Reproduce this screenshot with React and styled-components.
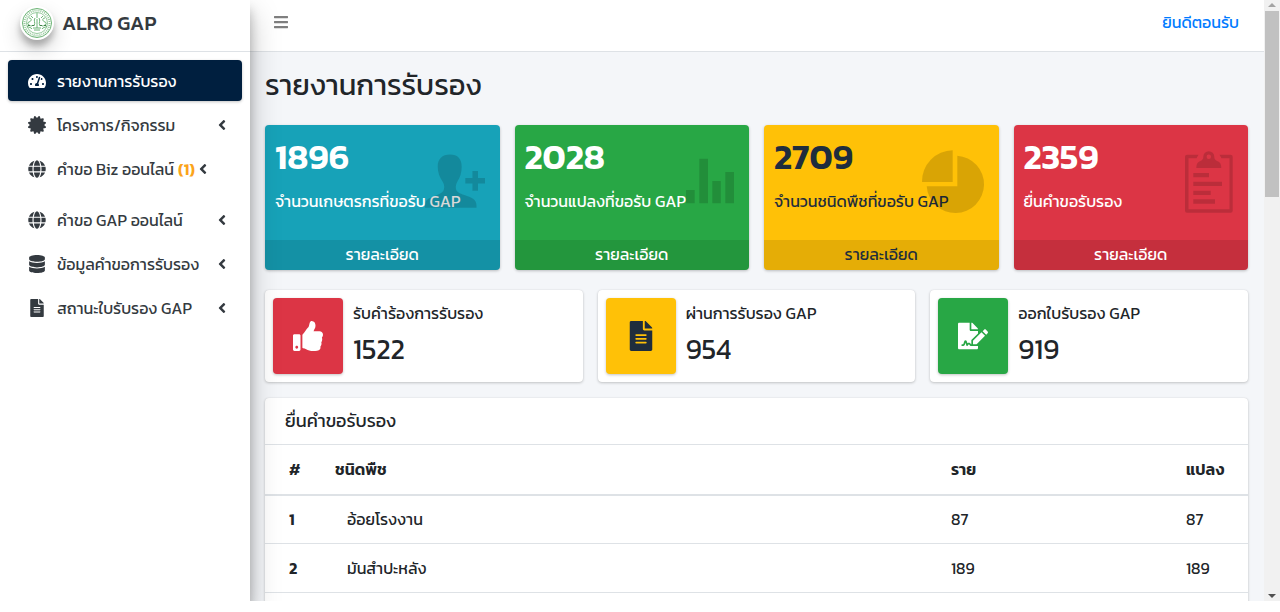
import React from "react";
import styled, { createGlobalStyle } from "styled-components";
import {
  FaAngleLeft,
  FaBars,
  FaCertificate,
  FaDatabase,
  FaFileAlt,
  FaFileSignature,
  FaGlobe,
  FaTachometerAlt,
  FaThumbsUp,
} from "react-icons/fa";

const GlobalStyle = createGlobalStyle`
  *, *::before, *::after { box-sizing: border-box; }
  body {
    margin: 0;
    background: #fff;
    color: #212529;
    font-family: Kanit, "Noto Sans Thai", "Noto Sans", sans-serif;
    font-size: 16px;
    line-height: 24px;
  }
  h1, h2, p, ul, dl, dd { margin: 0; padding: 0; }
  button { font: inherit; color: inherit; border: 0; background: none; padding: 0; cursor: pointer; }
  a { text-decoration: none; color: inherit; }
`;

const Screen = styled.div`
  height: 100vh;
  padding-bottom: 11px;
`;

const Shell = styled.div`
  display: flex;
  height: 100%;
  overflow: hidden;
`;

const Sidebar = styled.aside`
  position: relative;
  z-index: 2;
  flex: 0 0 250px;
  background: #fff;
  box-shadow: 0 14px 28px rgba(0, 0, 0, 0.25), 0 10px 10px rgba(0, 0, 0, 0.22);
`;

const Brand = styled.a`
  display: flex;
  align-items: center;
  gap: 8px;
  height: 52px;
  padding: 0 20px 5px;
  border-bottom: 1px solid #dee2e6;
  color: #343a40;
  font-size: 20px;
  font-weight: 500;
  white-space: nowrap;
`;

const Logo = styled.svg`
  flex: none;
  width: 34px;
  height: 34px;
  border-radius: 50%;
  background: #fff;
  box-shadow: 0 10px 20px rgba(0, 0, 0, 0.19), 0 6px 6px rgba(0, 0, 0, 0.23);
`;

const Menu = styled.ul`
  display: flex;
  flex-direction: column;
  gap: 3px;
  padding: 8px;
  list-style: none;
`;

const MenuItem = styled.li`
  padding-bottom: ${(p) => (p.$loose ? 7 : 0)}px;
`;

const MenuLink = styled.a`
  display: flex;
  align-items: center;
  height: 41px;
  padding: 0 12px 0 15px;
  border-radius: 4px;
  white-space: nowrap;
  color: ${(p) => (p.$active ? "#fff" : "#343a40")};
  background: ${(p) => (p.$active ? "#001f3f" : "transparent")};
  box-shadow: ${(p) => (p.$active ? "0 1px 3px rgba(0, 0, 0, 0.24)" : "none")};
`;

const MenuIcon = styled.span`
  display: flex;
  justify-content: center;
  width: 28px;
  margin-right: 6px;
  font-size: 18px;
`;

const Pending = styled.b`
  margin-left: 4px;
  color: #fba41a;
  font-weight: 600;
`;

const Chevron = styled(FaAngleLeft)`
  margin-left: ${(p) => (p.$inline ? "0" : "auto")};
  font-size: 16px;
`;

const Page = styled.div`
  flex: 1;
  min-width: 0;
  background: #f4f6f9;
`;

const TopBar = styled.header`
  display: flex;
  align-items: center;
  justify-content: space-between;
  height: 52px;
  padding: 0 25px 7px 23px;
  background: #fff;
  border-bottom: 1px solid #dee2e6;
`;

const MenuButton = styled.button`
  display: flex;
  font-size: 16px;
  color: #7f7f7f;
`;

const Welcome = styled.a`
  color: #007bff;
`;

const Content = styled.main`
  padding: 16px 16px 0 15px;
`;

const PageTitle = styled.h1`
  margin-bottom: 23px;
  font-size: 29px;
  line-height: 34px;
  font-weight: 400;
  white-space: nowrap;
`;

const Columns = styled.div`
  display: grid;
  grid-template-columns: repeat(${(p) => p.$count}, minmax(0, 1fr));
  gap: 15px;
  margin-bottom: ${(p) => p.$after}px;
`;

const StatCard = styled.section`
  position: relative;
  overflow: hidden;
  border-radius: 4px;
  color: ${(p) => p.$ink};
  background: ${(p) => p.$fill};
  box-shadow: 0 1px 3px rgba(0, 0, 0, 0.24);
`;

const StatBody = styled.div`
  height: 115px;
  padding: 10px;
`;

const StatNumber = styled.h2`
  margin-bottom: 10px;
  font-size: 35px;
  line-height: 44px;
  font-weight: 600;
`;

const StatLabel = styled.p`
  white-space: nowrap;
`;

const StatIcon = styled.svg`
  position: absolute;
  top: 15px;
  right: 15px;
  width: 72px;
  height: 72px;
  overflow: visible;
  fill: rgba(0, 0, 0, 0.15);
`;

const StatMore = styled.a`
  display: block;
  height: 30px;
  line-height: 28px;
  text-align: center;
  background: rgba(0, 0, 0, 0.1);
`;

const InfoBox = styled.section`
  display: flex;
  gap: 10px;
  padding: 8px;
  border-radius: 4px;
  background: #fff;
  box-shadow: 0 0 1px rgba(0, 0, 0, 0.13), 0 1px 3px rgba(0, 0, 0, 0.2);
`;

const InfoIcon = styled.div`
  display: flex;
  align-items: center;
  justify-content: center;
  width: 70px;
  height: 76px;
  border-radius: 4px;
  font-size: 30px;
  color: ${(p) => p.$ink};
  background: ${(p) => p.$fill};
  box-shadow: 0 1px 3px rgba(0, 0, 0, 0.24);
`;

const InfoText = styled.dl`
  padding-top: 3px;
  white-space: nowrap;
`;

const InfoValue = styled.dd`
  padding-top: 8px;
  font-size: 28px;
  line-height: 32px;
`;

const TableCard = styled.section`
  padding-bottom: 40px;
  border-radius: 4px;
  background: #fff;
  box-shadow: 0 0 1px rgba(0, 0, 0, 0.13), 0 1px 3px rgba(0, 0, 0, 0.2);
`;

const TableTitle = styled.h2`
  padding: 0 20px;
  font-size: 18px;
  line-height: 46px;
  font-weight: 400;
`;

const Table = styled.table`
  width: 100%;
  table-layout: fixed;
  border-collapse: collapse;
  text-align: left;

  th, td {
    height: 49px;
    padding: 0 12px;
    border-top: 1px solid #dee2e6;
    border-bottom: 1px solid #dee2e6;
    white-space: nowrap;
  }
  th { font-weight: 600; }
  thead th { height: 50px; border-bottom: 2px solid #dee2e6; }
  th:first-child { padding-left: 24px; }
  td:nth-child(2) { padding-left: 24px; }
`;

const Col = styled.col`
  width: ${(p) => p.$width};
`;

const ScrollTrack = styled.div`
  flex: 0 0 16px;
  display: flex;
  flex-direction: column;
  align-items: center;
  background: #f1f1f1;
`;

const ScrollThumb = styled.div`
  width: 14px;
  height: 31%;
  margin: 4px 0 auto;
  background: #c1c1c1;
`;

const ScrollArrow = styled.svg`
  width: 8px;
  height: 4px;
  margin: ${(p) => (p.$down ? "0 0 3px" : "3px 0 0")};
  fill: ${(p) => (p.$down ? "#505050" : "#a3a3a3")};
`;

const menu = [
  { label: "รายงานการรับรอง", icon: FaTachometerAlt, active: true },
  { label: "โครงการ/กิจกรรม", icon: FaCertificate },
  { label: "คำขอ Biz ออนไลน์", icon: FaGlobe, pending: "(1)" },
  { label: "คำขอ GAP ออนไลน์", icon: FaGlobe },
  { label: "ข้อมูลคำขอการรับรอง", icon: FaDatabase },
  { label: "สถานะใบรับรอง GAP", icon: FaFileAlt },
];

const PersonAdd = () => (
  <>
    <path d="M37 14.500c-8 0-12.300 4.500-12.300 12 0 6 2 11 4.500 14.500 1.800 2.500 2.300 5 1.800 8-.5 3-3 4.500-7 6-7 2.500-12 4-12 10.500v2.200h51.500v-2.200c0-6.500-5-8-12-10.500-5-1.500-8-3-8.500-6-.5-3 .2-5.500 1.700-8 2.500-3.500 4-8.500 4-14.500 0-7.500-3.700-12-11.700-12z" />
    <path d="M59.400 31h5.600v7h7v5.600h-7v7.100h-5.600v-7.100h-7.100v-5.600h7.100z" />
  </>
);

const Bars = () => (
  <path d="M24 50h8.700v13.300H24zM37.300 18.700H46v44.600h-8.700zM50.300 41h8.500v22.300h-8.500zM63.300 32H72v31.300h-8.700z" />
);

const Pie = () => (
  <>
    <path d="M40.700 42V10.300A31 31 0 0 0 10 42z" />
    <path d="M45.300 15.700v30.600H14.700A28.700 28.700 0 1 0 45.300 15.700z" />
  </>
);

const Clipboard = () => (
  <>
    <path d="M26 14.700h11.500l-2 3.500h-8v51h41v-51h-8l-2-3.500h11.200a2 2 0 0 1 2 2v54a2 2 0 0 1-2 2H26a2 2 0 0 1-2-2v-54a2 2 0 0 1 2-2z" />
    <path
      fillRule="evenodd"
      d="M47.800 11.200a5.500 5.500 0 0 1 5.500 5.500c0 3 2 3.800 4 4.800 2 1 3 3 3 6.500h-25c0-3.500 1-5.500 3-6.500s4-1.800 4-4.800a5.500 5.500 0 0 1 5.500-5.500zm0 3.300a2.200 2.200 0 1 0 0 4.400 2.200 2.200 0 0 0 0-4.400z"
    />
    <path d="M32.300 33h15.700v4.300H32.300zM32.300 41.700H61V46H32.300zM32.300 50.700h17.400V55H32.300zM32.300 59.300H54v4.400H32.300z" />
  </>
);

const stats = [
  { value: 1896, label: "จำนวนเกษตรกรที่ขอรับ GAP", fill: "#17a2b8", ink: "#fff", icon: PersonAdd },
  { value: 2028, label: "จำนวนแปลงที่ขอรับ GAP", fill: "#28a745", ink: "#fff", icon: Bars },
  { value: 2709, label: "จำนวนชนิดพืชที่ขอรับ GAP", fill: "#ffc107", ink: "#1f2d3d", icon: Pie },
  { value: 2359, label: "ยื่นคำขอรับรอง", fill: "#dc3545", ink: "#fff", icon: Clipboard },
];

const infos = [
  { value: 1522, label: "รับคำร้องการรับรอง", fill: "#dc3545", ink: "#fff", icon: FaThumbsUp },
  { value: 954, label: "ผ่านการรับรอง GAP", fill: "#ffc107", ink: "#1f2d3d", icon: FaFileAlt },
  { value: 919, label: "ออกใบรับรอง GAP", fill: "#28a745", ink: "#fff", icon: FaFileSignature },
];

const crops = [
  { name: "อ้อยโรงงาน", people: 87, plots: 87 },
  { name: "มันสำปะหลัง", people: 189, plots: 189 },
];

const Emblem = () => (
  <Logo viewBox="0 0 34 34" aria-hidden="true">
    <g fill="none" stroke="#6db476">
      <circle cx="17" cy="17" r="14.500" strokeWidth="1" />
      <circle cx="17" cy="17" r="12.500" strokeWidth="2" strokeDasharray="1 1" opacity="0.700" />
      <circle cx="17" cy="17" r="10.500" strokeWidth="0.700" />
      <path strokeWidth="1" d="M17 7v5M15 12c-2 3 1 4-1 8M19 12c2 3-1 4 1 8M13 22h8M14 24h6M17 13v9M9 12c3 0 3 3 0 4s0 4 3 4M25 12c-3 0-3 3 0 4s0 4-3 4M7 20c2 2 4 1 5 3M27 20c-2 2-4 1-5 3M11 10l2 2M23 10l-2 2" />
    </g>
    <path fill="#3f7d49" d="M8 19h2v1H8zM24 19h2v1h-2zM12 19h2v1h-2zM20 19h2v1h-2z" />
  </Logo>
);

export default function App() {
  return (
    <Screen>
      <GlobalStyle />
      <Shell>
        <Sidebar>
          <Brand href="#">
            <Emblem />
            ALRO GAP
          </Brand>
          <nav>
            <Menu>
              {menu.map(({ label, icon: Icon, active, pending }) => (
                <MenuItem key={label} $loose={Boolean(pending)}>
                  <MenuLink href="#" $active={active}>
                    <MenuIcon>
                      <Icon />
                    </MenuIcon>
                    {label}
                    {pending && <Pending>{pending}</Pending>}
                    {!active && <Chevron $inline={Boolean(pending)} />}
                  </MenuLink>
                </MenuItem>
              ))}
            </Menu>
          </nav>
        </Sidebar>
        <Page>
          <TopBar>
            <MenuButton type="button" aria-label="เมนู">
              <FaBars />
            </MenuButton>
            <Welcome href="#">ยินดีตอนรับ</Welcome>
          </TopBar>
          <Content>
            <PageTitle>รายงานการรับรอง</PageTitle>
            <Columns $count={4} $after={20}>
              {stats.map(({ value, label, fill, ink, icon: Icon }) => (
                <StatCard key={label} $fill={fill} $ink={ink}>
                  <StatBody>
                    <StatNumber>{value}</StatNumber>
                    <StatLabel>{label}</StatLabel>
                  </StatBody>
                  <StatIcon viewBox="0 0 72 72" aria-hidden="true">
                    <Icon />
                  </StatIcon>
                  <StatMore href="#">รายละเอียด</StatMore>
                </StatCard>
              ))}
            </Columns>
            <Columns $count={3} $after={16}>
              {infos.map(({ value, label, fill, ink, icon: Icon }) => (
                <InfoBox key={label}>
                  <InfoIcon $fill={fill} $ink={ink}>
                    <Icon />
                  </InfoIcon>
                  <InfoText>
                    <dt>{label}</dt>
                    <InfoValue>{value}</InfoValue>
                  </InfoText>
                </InfoBox>
              ))}
            </Columns>
            <TableCard>
              <TableTitle>ยื่นคำขอรับรอง</TableTitle>
              <Table>
                <colgroup>
                  <Col $width="58px" />
                  <Col $width="auto" />
                  <Col $width="235px" />
                  <Col $width="74px" />
                </colgroup>
                <thead>
                  <tr>
                    <th scope="col">#</th>
                    <th scope="col">ชนิดพืช</th>
                    <th scope="col">ราย</th>
                    <th scope="col">แปลง</th>
                  </tr>
                </thead>
                <tbody>
                  {crops.map((crop, i) => (
                    <tr key={crop.name}>
                      <th scope="row">{i + 1}</th>
                      <td>{crop.name}</td>
                      <td>{crop.people}</td>
                      <td>{crop.plots}</td>
                    </tr>
                  ))}
                </tbody>
              </Table>
            </TableCard>
          </Content>
        </Page>
        <ScrollTrack aria-hidden="true">
          <ScrollArrow viewBox="0 0 8 4">
            <path d="M4 0l4 4H0z" />
          </ScrollArrow>
          <ScrollThumb />
          <ScrollArrow viewBox="0 0 8 4" $down>
            <path d="M0 0h8L4 4z" />
          </ScrollArrow>
        </ScrollTrack>
      </Shell>
    </Screen>
  );
}
